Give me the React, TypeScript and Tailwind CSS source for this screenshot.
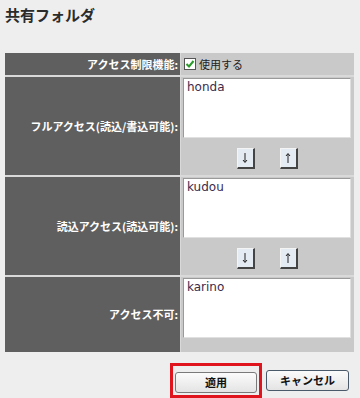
import React from 'react';

const jp = { fontFamily: '"Noto Sans CJK JP", "Liberation Sans", sans-serif' };

function ArrowButton({ up }: { up?: boolean }) {
  return (
    <button className="w-[18px] h-[21px] bg-[#e4ebf2] border border-[#f4f4f4] border-r-[#444] border-b-[#444] border-r-2 border-b-2 flex items-center justify-center">
      <svg width="6" height="12" viewBox="0 0 6 12">
        {up ? (
          <>
            <path d="M3 2 L3 11" stroke="#222" strokeWidth="1" />
            <path d="M1 4 L3 1.5 L5 4" fill="none" stroke="#222" strokeWidth="1" />
          </>
        ) : (
          <>
            <path d="M3 1 L3 10" stroke="#222" strokeWidth="1" />
            <path d="M1 8 L3 10.5 L5 8" fill="none" stroke="#222" strokeWidth="1" />
          </>
        )}
      </svg>
    </button>
  );
}

function ListCell({ value, buttons = true }: { value: string; buttons?: boolean }) {
  return (
    <div className="bg-[#c9c9c9] pl-[2px] pr-[3px] pt-[1px] flex flex-col">
      <div
        className="h-[60px] bg-white border border-[#9a9a9a] border-r-[#e0e0e0] border-b-[#e0e0e0] px-[3px] text-[12px] leading-[16px] text-[#3b2b4b]"
        style={{ fontFamily: '"DejaVu Sans", "Liberation Sans", sans-serif' }}
      >
        {value}
      </div>
      {buttons && (
        <div className="flex justify-center gap-[25px] pt-[10px] pb-[6px]">
          <ArrowButton />
          <ArrowButton up />
        </div>
      )}
    </div>
  );
}

function Label({ children }: { children: React.ReactNode }) {
  return (
    <div className="bg-[#5f5f5f] text-white text-[11px] font-bold flex items-center justify-end pr-[2px]" style={jp}>
      {children}
    </div>
  );
}

export default function App() {
  return (
    <div className="w-[360px] h-[398px] bg-[#eeeeee] relative overflow-hidden" style={jp}>
      <h1 className="pl-[5px] pt-[5px] text-[15px] font-bold text-[#2b2b2b] leading-[20px]">共有フォルダ</h1>
      <div className="absolute left-[5px] top-[53px] w-[349px] bg-[#d9d9d9] grid grid-cols-[175px_1fr] gap-x-[1px] gap-y-[2px]">
        <Label>アクセス制限機能:</Label>
        <div className="bg-[#c9c9c9] h-[22px] flex items-center pl-[3px] gap-[3px] text-[11px] text-[#222]">
          <span className="w-[12px] h-[12px] bg-white border border-[#555] flex items-center justify-center">
            <svg width="10" height="10" viewBox="0 0 10 10">
              <path d="M1.5 5 L4 7.5 L8.5 2" fill="none" stroke="#2a9a2a" strokeWidth="2" />
            </svg>
          </span>
          使用する
        </div>
        <Label>フルアクセス(読込/書込可能):</Label>
        <ListCell value="honda" />
        <Label>読込アクセス(読込可能):</Label>
        <ListCell value="kudou" />
        <Label>アクセス不可:</Label>
        <div className="bg-[#c9c9c9] pl-[2px] pr-[3px] pt-[1px] pb-[14px]">
          <div
            className="h-[60px] bg-white border border-[#9a9a9a] border-r-[#e0e0e0] border-b-[#e0e0e0] px-[3px] text-[12px] leading-[16px] text-[#3b2b4b]"
            style={{ fontFamily: '"DejaVu Sans", "Liberation Sans", sans-serif' }}
          >
            karino
          </div>
        </div>
      </div>
      <div className="absolute top-[363px] left-[170px] flex items-center gap-[4px]">
        <div className="border-[3px] border-[#e0141c] p-[2px]">
          <button className="w-[82px] h-[21px] bg-gradient-to-b from-[#fbfbfb] to-[#e4e4e4] border border-[#7a7a7a] rounded-[3px] text-[11px] font-bold text-[#111]">
            適用
          </button>
        </div>
        <button className="w-[83px] h-[21px] bg-gradient-to-b from-[#fbfbfb] to-[#e4e4e4] border border-[#4a5a6a] rounded-[3px] text-[11px] font-bold text-[#111]">
          キャンセル
        </button>
      </div>
    </div>
  );
}
